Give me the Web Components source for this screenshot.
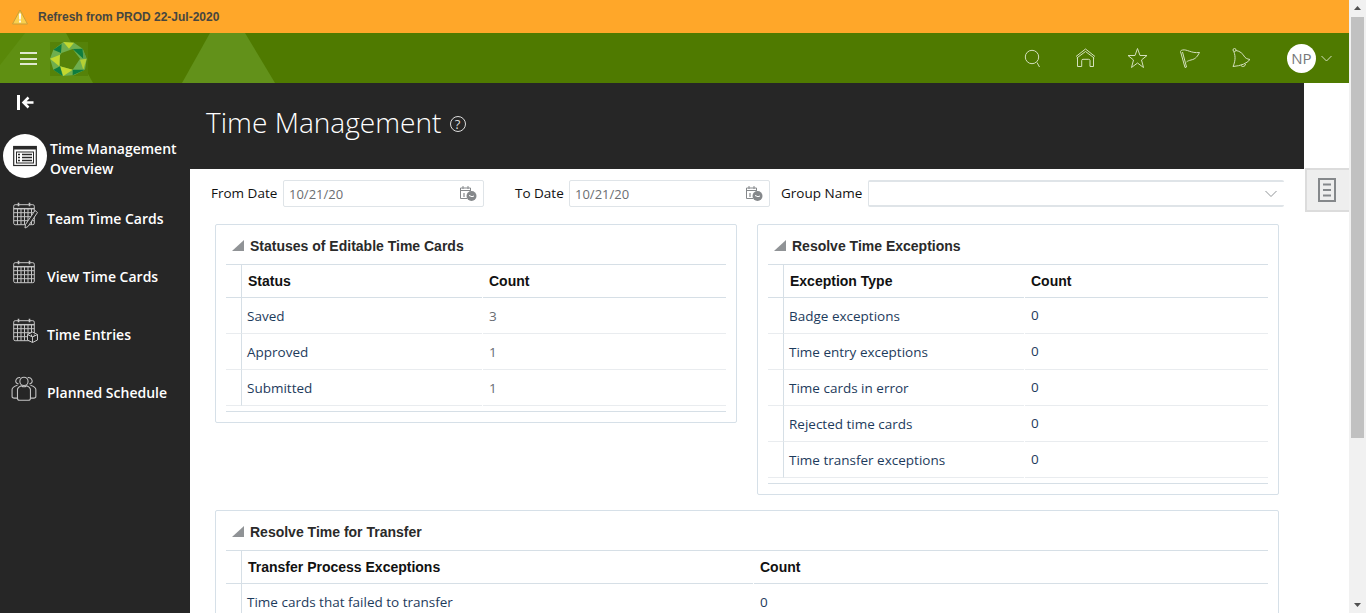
<!DOCTYPE html>
<html>
<head>
<meta charset="utf-8">
<title>Time Management</title>
<style>
	html, body { margin:0; height:613px; overflow:hidden; background:#fff; }
</style>
</head>
<body>

<tm-shell>
	<tm-banner>Refresh from PROD 22-Jul-2020</tm-banner>
	<tm-header initials="NP"></tm-header>
	<tm-workspace>
		<tm-sidebar slot="side">
			<tm-nav-item icon="overview" active>Time Management<br>Overview</tm-nav-item>
			<tm-nav-item icon="teamcards">Team Time Cards</tm-nav-item>
			<tm-nav-item icon="calendar">View Time Cards</tm-nav-item>
			<tm-nav-item icon="entries">Time Entries</tm-nav-item>
			<tm-nav-item icon="people">Planned Schedule</tm-nav-item>
		</tm-sidebar>

		<tm-title-band>Time Management</tm-title-band>

		<tm-filters>
			<tm-field label="From Date" value="10/21/20" label-width="66" width="201"></tm-field>
			<tm-field label="To Date" value="10/21/20" label-width="48" width="201" style="margin-left:31px"></tm-field>
			<tm-field label="Group Name" label-width="81" select style="margin-left:11px;flex:1"></tm-field>
		</tm-filters>

		<tm-panels>
			<tm-panel heading="Statuses of Editable Time Cards" style="--col:241px">
				<tm-row head name="Status" count="Count"></tm-row>
				<tm-row name="Saved" count="3" muted></tm-row>
				<tm-row name="Approved" count="1" muted></tm-row>
				<tm-row name="Submitted" count="1" muted></tm-row>
			</tm-panel>
			<tm-panel heading="Resolve Time Exceptions" style="--col:241px">
				<tm-row head name="Exception Type" count="Count"></tm-row>
				<tm-row name="Badge exceptions" count="0" raised></tm-row>
				<tm-row name="Time entry exceptions" count="0" raised></tm-row>
				<tm-row name="Time cards in error" count="0" raised></tm-row>
				<tm-row name="Rejected time cards" count="0" raised></tm-row>
				<tm-row name="Time transfer exceptions" count="0" raised></tm-row>
			</tm-panel>
			<tm-panel heading="Resolve Time for Transfer" wide style="--col:512px">
				<tm-row head name="Transfer Process Exceptions" count="Count"></tm-row>
				<tm-row name="Time cards that failed to transfer" count="0"></tm-row>
			</tm-panel>
		</tm-panels>
	</tm-workspace>
</tm-shell>

<script>
/* shared icons, all on a 24 box */
var calBody = '<rect x=".7" y="2.700" width="20.600" height="20" rx="1.500"/><path d="M.7 6.700h20.600" stroke-width="1.500"/><path d="M5.500 .7v3.500M16.500 .7v3.500" stroke-width="1.600"/>';
var calGrid = '<path d="M.7 10.700h20.600M.7 14.700h20.600M.7 18.700h20.600M4.500 6.700v16M8 6.700v16M11.500 6.700v16M15 6.700v16M18.500 6.700v16"/>';
var calStyle = 'stroke="#c4c4c4" fill="none"';
var icons = {
	overview: '<g stroke="#2a2a2a" fill="none"><rect x=".7" y="2.500" width="22.600" height="19" stroke-width="1.200"/><path d="M.7 4h22.600" stroke-width="3"/><rect x="3.500" y="8" width="17" height="11" stroke-width="1"/><path d="M5 10.500h2M5 13.500h2M5 16.500h2M9 10.500h10M9 13.500h10M9 16.500h10" stroke-width="1.500"/></g>',
	teamcards: '<g '+calStyle+'>'+calBody+calGrid+'</g><path d="M24.500 10.500l-9.500 14-3 1.500 .5-3.500 9.500-14z" fill="#262626" stroke="#c4c4c4"/>',
	calendar: '<g '+calStyle+'>'+calBody+calGrid+'</g>',
	entries: '<g '+calStyle+'>'+calBody+calGrid+'</g><path d="M19.500 14l5 2.500v5.500l-5 2.500-5-2.500v-5.500zM14.500 16.500l5 2.500 5-2.500M19.500 19v5.500" fill="#262626" stroke="#c4c4c4"/>',
	people: '<g stroke="#c4c4c4" fill="none" transform="translate(-2 0) scale(1.080)"><path d="M7 7.500c-2-.5-3-2-2.500-3.500.5-2 2.500-3 4-2.500M17 7.500c2-.5 3-2 2.500-3.500-.5-2-2.500-3-4-2.500"/><path d="M6 8.500c-3 1-5 2-5 4v6.500c0 1 1 1.500 2 1.500h3M18 8.500c3 1 5 2 5 4v6.500c0 1-1 1.500-2 1.500h-3"/><circle cx="12" cy="5" r="3.800"/><path d="M9.500 9c-2 .8-3.500 1.800-3.500 3.500v8c0 1.500 1 2 2 2h8c1 0 2-.5 2-2v-8c0-1.700-1.500-2.700-3.500-3.500-1.500 1.200-3.500 1.200-5 0z"/></g>',
	search: '<circle cx="11" cy="11" r="6.700"/><path d="M16 16.500l2.500 4.500"/>',
	home: '<path d="M3 10.500L12.500 3 22 10.500M3.800 12L12.500 5.500 21.200 12M4.500 11.500V20.500H8.700V14.500Q8.700 13.300 10 13.300H15.500Q17 13.300 17 14.500V20.500H20.500V11.500"/>',
	star: '<path d="M12.500 2.500L15 9.500H22L16.500 14L18.500 21.500L12.500 17L6.500 21.500L8.500 14L3 9.500H10Z"/>',
	flag: '<path d="M3.500 5.500L8 21.500L9.500 21L5.500 6M3.500 5.500Q4 4 5.500 4C10 3 14 7.500 22.500 6.500C20.500 10 19 13 14 14C12 14.500 10.500 15 9.500 16"/>',
	bell: '<g transform="translate(-1 0)"><circle cx="6.500" cy="4" r="1.500"/><path d="M8 4.500C12 5 15 8 16 10C17 12 19 13 22 13.500Q17 19.500 5 20.500C7 16 8 11 5.800 5.500M13 19.500a2.500 2.500 0 0 0 4.500-1.500"/></g>'
};

class tmShell extends HTMLElement {
	constructor() {
		super();
		this.attachShadow({ mode: 'open' }).innerHTML = `
		<style>
			:host { display:flex; height:613px; overflow:hidden; }
			.-main { width:1349px; height:613px; overflow:hidden; display:flex; flex-direction:column; }
			.-bar { width:17px; background:#f1f1f1; position:relative; padding:17px 2px 0; box-sizing:border-box; }
			.-thumb { height:421px; background:#c1c1c1; }
			.-bar svg { position:absolute; left:4px; fill:#505050; }
			.-up { top:3px; }
			.-down { bottom:3px; }
		</style>
		<div class="-main"><slot></slot></div>
		<div class="-bar">
			<svg class="-up" width="9" height="9" viewBox="0 0 9 9"><path d="M1 7h7L4.500 3z"/></svg>
			<div class="-thumb"></div>
			<svg class="-down" width="9" height="9" viewBox="0 0 9 9"><path d="M1 2h7L4.500 6z"/></svg>
		</div>`;
	}
}

class tmBanner extends HTMLElement {
	constructor() {
		super();
		this.attachShadow({ mode: 'open' }).innerHTML = `
		<style>
			:host {
				display:flex; flex:none; height:33px; align-items:center; gap:10px; padding-left:12px;
				background:#ffa729; color:#464640; font:bold 12px "Liberation Sans", sans-serif;
			}
			svg { flex:none; }
		</style>
		<svg width="16" height="16" viewBox="0 0 16 16">
			<path d="M8 1L15.500 15H.5z" fill="#fad04e" stroke="#c99e3a" stroke-linejoin="round"/>
			<path d="M7 4.500h2l-.2 6H7.200zM7.100 11.500h1.800v2H7.100z" fill="#fff"/>
		</svg>
		<span><slot></slot></span>`;
	}
}

class tmHeader extends HTMLElement {
	constructor() {
		super();
		var names = ['search','home','star','flag','bell'];
		var btns = names.map(n => `<svg class="-ico" width="24" height="24" viewBox="0 0 24 24">${icons[n]}</svg>`).join('');
		this.attachShadow({ mode: 'open' }).innerHTML = `
		<style>
			:host {
				display:flex; flex:none; height:50px; align-items:center; position:relative;
				background:#4f7a00; overflow:hidden; padding:0 17px 0 20px;
			}
			.-bg { position:absolute; left:0; top:0; }
			.-burger { position:relative; width:17px; height:13px; border-top:2px solid #dfe8cf; border-bottom:2px solid #dfe8cf; box-sizing:border-box; margin-top:1px; }
			.-burger::after { content:''; position:absolute; left:0; right:0; top:3.500px; height:2px; background:#dfe8cf; }
			.-logo { position:relative; margin-left:13px; margin-top:1px; background:#558209; }
			.-right { position:relative; margin-left:auto; display:flex; align-items:center; }
			.-icons { display:flex; gap:28px; margin-right:34px; }
			.-ico { fill:none; stroke:#d3e0bc; stroke-width:1; overflow:visible; }
			.-avatar {
				width:29px; height:29px; border-radius:50%; background:#fff; color:#75777a;
				display:flex; align-items:center; justify-content:center;
				font:15px "Open Sans", sans-serif;
			}
			.-chev { margin-left:5px; fill:none; stroke:#d3e0bc; }
		</style>
		<svg class="-bg" width="300" height="50" viewBox="0 0 300 50">
			<path d="M0 0H66L93 50H0Z" fill="#5f8f12"/>
			<path d="M0 0H25L0 32Z" fill="#598809"/>
			<path d="M210 0H245L275 50H182Z" fill="#62911a"/>
		</svg>
		<div class="-burger"></div>
		<!-- viewBox in the 3x coordinates the facets were read at -->
		<svg class="-logo" width="38" height="34" viewBox="150 122 114 102">
			<polygon fill="#6fae4e" fill-rule="evenodd" points="190,122 222,124 248,142 260,172 255,205 222,222 188,224 160,205 150,172 160,145 190,122 185,155 178,165 180,195 218,205 240,172 218,143 185,155"/>
			<polygon fill="#c2d82f" points="190,122 222,124 207,142"/>
			<polygon fill="#0f7d3f" points="218,143 248,142 250,172"/>
			<polygon fill="#5ea04a" points="248,142 260,172 250,172"/>
			<polygon fill="#b4d034" points="240,175 260,172 250,205"/>
			<polygon fill="#0f7d3f" points="218,222 218,205 255,205"/>
			<polygon fill="#c2d82f" points="180,195 218,205 190,224"/>
			<polygon fill="#0f7d3f" points="160,205 180,195 188,224"/>
			<polygon fill="#c2d82f" points="150,172 180,160 178,195"/>
			<polygon fill="#0f7d3f" points="160,145 185,128 183,155"/>
		</svg>
		<div class="-right">
			<div class="-icons">${btns}</div>
			<div class="-avatar">${this.getAttribute('initials')}</div>
			<svg class="-chev" width="11" height="7" viewBox="0 0 11 7"><path d="M.5 1l5 5 5-5"/></svg>
		</div>`;
	}
}

class tmWorkspace extends HTMLElement {
	constructor() {
		super();
		this.attachShadow({ mode: 'open' }).innerHTML = `
		<style>
			:host { display:flex; flex:1; min-height:0; }
			.-side { flex:none; width:190px; }
			.-content { flex:none; width:1114px; }
			.-gutter { flex:none; width:45px; padding:85px 0 0 1px; box-sizing:border-box; }
			.-tab {
				height:44px; background:#eee; border:solid #dcdcdc; border-width:2px 0 2px 2px; box-sizing:border-box;
				display:flex; align-items:center; justify-content:center;
			}
			.-tab svg { margin-right:2px; }
		</style>
		<div class="-side"><slot name="side"></slot></div>
		<div class="-content"><slot></slot></div>
		<div class="-gutter">
			<div class="-tab">
				<svg width="18" height="24" viewBox="0 0 18 24" fill="none" stroke="#85888b" stroke-width="2">
					<rect x="1" y="1" width="16" height="22"/><path d="M5 6.500h8M5 12h8M5 17.500h8"/>
				</svg>
			</div>
		</div>`;
	}
}

class tmSidebar extends HTMLElement {
	constructor() {
		super();
		this.attachShadow({ mode: 'open' }).innerHTML = `
		<style>
			:host { display:block; height:100%; background:#262626; color:#fff; }
			.-collapse { display:block; margin-left:17px; padding-top:12px; height:39px; box-sizing:border-box; }
			.-items { display:flex; flex-direction:column; padding-top:12px; }
		</style>
		<svg class="-collapse" width="17" height="39" viewBox="0 0 17 15" preserveAspectRatio="xMinYMin" fill="none" stroke="#fff" stroke-width="2.500">
			<path d="M1.500 0v15" stroke-width="3"/><path d="M16.500 7.500H6.500M11.500 2.500l-5 5 5 5"/>
		</svg>
		<div class="-items"><slot></slot></div>`;
	}
}

class tmNavItem extends HTMLElement {
	constructor() {
		super();
		this.attachShadow({ mode: 'open' }).innerHTML = `
		<style>
			:host {
				display:flex; align-items:center; height:58px; padding-left:13px;
				font:600 14px/20px "Open Sans", sans-serif;
			}
			:host([active]) { height:44px; padding-left:3px; margin-bottom:12px; }
			.-ico { flex:none; width:24px; height:24px; margin-right:10px; margin-bottom:10px; display:flex; align-items:center; justify-content:center; }
			:host([active]) .-ico { width:44px; height:44px; margin:0 3px 0 0; border-radius:50%; background:#fff; }
			:host([active]) .-text { margin-top:6px; }
		</style>
		<div class="-ico"><svg width="24" height="24" viewBox="0 0 24 24" overflow="visible">${icons[this.getAttribute('icon')]}</svg></div>
		<div class="-text"><slot></slot></div>`;
	}
}

class tmTitleBand extends HTMLElement {
	constructor() {
		super();
		this.attachShadow({ mode: 'open' }).innerHTML = `
		<style>
			:host {
				display:flex; align-items:center; height:86px; padding:0 0 9px 16px; box-sizing:border-box;
				background:#262626; color:#fff; font:300 28.100px "Open Sans", sans-serif;
			}
			.-help {
				width:14px; height:14px; margin-left:8px; margin-top:5px; border:1.500px solid #ddd; border-radius:50%;
				display:flex; align-items:center; justify-content:center;
				font:400 13px "Open Sans", sans-serif; color:#ddd;
			}
		</style>
		<span><slot></slot></span><span class="-help">?</span>`;
	}
}

class tmFilters extends HTMLElement {
	constructor() {
		super();
		this.attachShadow({ mode: 'open' }).innerHTML = `
		<style>
			:host { display:flex; padding:11px 20px 0 21px; }
		</style>
		<slot></slot>`;
	}
}

class tmField extends HTMLElement {
	constructor() {
		super();
		var isSelect = this.hasAttribute('select');
		var width = this.getAttribute('width');
		var trail = isSelect
			? '<svg width="12" height="8" viewBox="0 0 12 8" fill="none" stroke="#909497"><path d="M.5 1l5.500 5.500L11.500 1"/></svg>'
			: `<svg width="18" height="17" viewBox="0 0 18 17" fill="none" stroke="#85888b">
				<path d="M8 13.500H1.500V3h10v3M1.500 5.500h10M4 1v3M9 1v3"/><path d="M5 8v4" stroke-width="1.200"/>
				<circle cx="12.500" cy="11" r="5" fill="#85888b" stroke="none"/><path d="M10 10.500l3 1.200 2-.7" stroke="#fff"/>
			</svg>`;
		this.attachShadow({ mode: 'open' }).innerHTML = `
		<style>
			:host { display:flex; align-items:center; height:27px; font:500 13.500px "Open Sans", sans-serif; color:#111; }
			.-label { flex:none; width:${this.getAttribute('label-width')}px; margin:-2px 6px 0 0; white-space:nowrap; }
			.-input {
				${width ? 'width:'+width+'px;' : 'flex:1;'} height:27px; box-sizing:border-box;
				border:1px solid #dfe4e8; border-radius:2px;
				${isSelect ? 'border-right:0;border-top-width:2px;border-bottom-width:2px;' : ''}
				display:flex; align-items:center; justify-content:space-between;
				padding:0 ${isSelect ? '7px' : '6px'} 0 5px; color:#6b6e72; font-weight:400; font-size:13px;
			}
		</style>
		<span class="-label">${this.getAttribute('label')}</span>
		<div class="-input"><span>${this.getAttribute('value') || ''}</span>${trail}</div>`;
	}
}

class tmPanels extends HTMLElement {
	constructor() {
		super();
		this.attachShadow({ mode: 'open' }).innerHTML = `
		<style>
			:host {
				display:grid; grid-template-columns:522px 522px; column-gap:20px; row-gap:15px;
				align-items:start; padding:17px 25px 0;
			}
		</style>
		<slot></slot>`;
	}
}

class tmPanel extends HTMLElement {
	constructor() {
		super();
		var wide = this.hasAttribute('wide');
		this.attachShadow({ mode: 'open' }).innerHTML = `
		<style>
			:host {
				display:block; box-sizing:border-box; padding:0 10px 10px;
				border:1px solid #d6e0e8; border-radius:2px; background:#fff;
				${wide ? 'grid-column:1 / 3;' : ''}
			}
			.-title {
				display:flex; align-items:center; height:39px; box-sizing:border-box; padding:2px 0 0 6px; gap:6px;
				font:bold 14px "Liberation Sans", sans-serif; color:#2a2a2a;
			}
			.-tri { width:12px; height:11px; flex:none; fill:#909396; }
			.-rows { border-top:1px solid #d6dfe6; }
			.-end { height:1px; margin-top:5px; background:#d6dfe6; }
		</style>
		<div class="-title"><svg class="-tri" viewBox="0 0 12 11"><path d="M12 0V11H0Z"/></svg><span>${this.getAttribute('heading')}</span></div>
		<div class="-rows"><slot></slot></div>
		<div class="-end"></div>`;
	}
}

class tmRow extends HTMLElement {
	constructor() {
		super();
		this.attachShadow({ mode: 'open' }).innerHTML = `
		<style>
			:host {
				display:grid; grid-template-columns:16px var(--col) 1fr; height:36px;
				font:13.500px "Open Sans", sans-serif; color:#1d3b5c;
			}
			:host([head]) { height:33px; font:bold 14px "Liberation Sans", sans-serif; color:#111; }
			:host([muted]) .-count { color:#696d72; }
			:host([raised]) .-count { padding-bottom:2px; }
			div { display:flex; align-items:center; box-sizing:border-box; border-bottom:1px solid #e9ecef; }
			:host([head]) div { border-bottom-color:#d6dfe6; }
			.-gut { border-right:1px solid #d6dfe6; }
			.-name { padding-left:5px; margin-right:1px; }
			:host([head]) .-name { padding-left:6px; }
			.-count { padding-left:6px; }
		</style>
		<div class="-gut"></div>
		<div class="-name">${this.getAttribute('name')}</div>
		<div class="-count">${this.getAttribute('count')}</div>`;
	}
}

customElements.define('tm-shell', tmShell);
customElements.define('tm-banner', tmBanner);
customElements.define('tm-header', tmHeader);
customElements.define('tm-workspace', tmWorkspace);
customElements.define('tm-sidebar', tmSidebar);
customElements.define('tm-nav-item', tmNavItem);
customElements.define('tm-title-band', tmTitleBand);
customElements.define('tm-filters', tmFilters);
customElements.define('tm-field', tmField);
customElements.define('tm-panels', tmPanels);
customElements.define('tm-panel', tmPanel);
customElements.define('tm-row', tmRow);
</script>
</body>
</html>
